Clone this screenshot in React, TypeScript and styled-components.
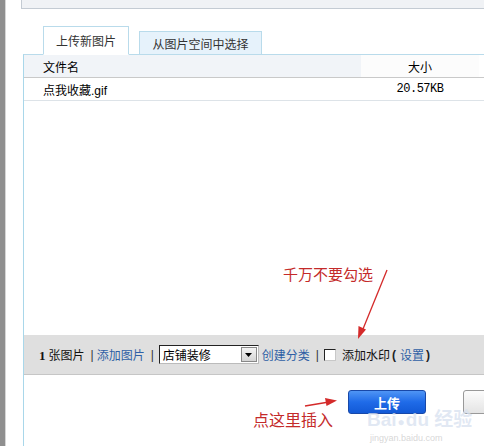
import React from 'react'
import styled, { createGlobalStyle } from 'styled-components';

const GlobalStyle = createGlobalStyle`
  html, body {
    margin: 0;
    padding: 0;
    background: #fff;
    overflow: hidden;
  }
  body {
    font-family: "Liberation Sans", "Noto Sans CJK SC", sans-serif;
    font-size: 12px;
    color: #000;
  }
`;

const App = () => {
  return (
    <>
      <GlobalStyle />
      <Page>
        <Strip />
        <Content>
          <TopPanel />
          <Dialog>
            <Tabs>
              <Tab active>上传新图片</Tab>
              <Tab>从图片空间中选择</Tab>
            </Tabs>
            <TableBox>
              <HeadRow>
                <NameHead>文件名</NameHead>
                <SizeHead>大小</SizeHead>
              </HeadRow>
              <FileRow>
                <NameCell>点我收藏.gif</NameCell>
                <SizeCell>20.57KB</SizeCell>
              </FileRow>
              <Blank />
              <Toolbar>
                <Count><b>1</b>张图片</Count>
                <Sep>|</Sep>
                <BlueLink>添加图片</BlueLink>
                <Sep>|</Sep>
                <FakeSelect>
                  <SelectText>店铺装修</SelectText>
                  <SelectButton>
                    <svg width="7" height="4" viewBox="0 0 7 4"><path d="M0 0h7L3.5 4z" fill="#000" /></svg>
                  </SelectButton>
                </FakeSelect>
                <BlueLink>创建分类</BlueLink>
                <Sep>|</Sep>
                <Check />
                <Plain>添加水印</Plain>
                <Paren>(</Paren>
                <BlueLink>设置</BlueLink>
                <Paren>)</Paren>
              </Toolbar>
              <Footer>
                <UploadButton>上传</UploadButton>
                <GreyButton />
              </Footer>
            </TableBox>
          </Dialog>
        </Content>

        <Note top={263} left={283} size={15}>千万不要勾选</Note>
        <Note top={407} left={253} size={16}>点这里插入</Note>
        <Arrows width="484" height="446" viewBox="0 0 484 446">
          <line x1="387" y1="270" x2="363" y2="329" stroke="#d42a2a" strokeWidth="1.3" />
          <path d="M358 339 L358.5 326 L366 329.5 Z" fill="#d42a2a" />
          <line x1="305" y1="406" x2="326" y2="402.5" stroke="#d42a2a" strokeWidth="1.5" />
          <path d="M337 400.5 L325 398 L326.5 406 Z" fill="#d42a2a" />
        </Arrows>
        <Watermark>
          <Mark>Bai<Paw>●</Paw>du 经验</Mark>
          <SmallMark>jingyan.baidu.com</SmallMark>
        </Watermark>
      </Page>
    </>
  )
}

const Page = styled.div`
  position: relative;
  display: flex;
  width: 484px;
  height: 446px;
  overflow: hidden;
`;

const Strip = styled.div`
  width: 5px;
  flex: none;
  background: #8f8f8f;
  border-right: 1px solid #d6d6d6;
`;

const Content = styled.div`
  flex: 1;
  display: flex;
  flex-direction: column;
  padding-left: 15px;
  min-width: 0;
`;

const TopPanel = styled.div`
  height: 8px;
  flex: none;
  background: #f0f2f5;
  border-left: 1px solid #c4cbd3;
  border-bottom: 1px solid #c4cbd3;
  margin-right: -20px;
`;

const Dialog = styled.div`
  flex: 1;
  display: flex;
  flex-direction: column;
  padding-left: 2px;
  margin-top: 17px;
  margin-right: -40px;
`;

const Tabs = styled.div`
  display: flex;
  align-items: flex-end;
  gap: 10px;
  padding-left: 20px;
  height: 29px;
  position: relative;
  z-index: 1;
  margin-bottom: -1px;
`;

const Tab = styled.div<{ active?: boolean }>`
  box-sizing: border-box;
  display: flex;
  align-items: center;
  justify-content: center;
  height: ${p => (p.active ? '29px' : '24px')};
  width: ${p => (p.active ? '86px' : '123px')};
  background: ${p => (p.active ? '#fff' : '#e6f2fb')};
  border: 1px solid #b9dbeb;
  border-bottom: ${p => (p.active ? '1px solid #fff' : '1px solid #b9dbeb')};
  color: #333;
  white-space: nowrap;
`;

const TableBox = styled.div`
  flex: 1;
  display: flex;
  flex-direction: column;
  border-left: 1px solid #a9d7ea;
  border-top: 1px solid #b9dbeb;
`;

const HeadRow = styled.div`
  display: flex;
  height: 22px;
  border-bottom: 1px solid #c9c9c9;
`;

const NameHead = styled.div`
  width: 318px;
  padding-left: 19px;
  display: flex;
  align-items: center;
  background: #f1f4f8;
`;

const SizeHead = styled.div`
  width: 118px;
  display: flex;
  align-items: center;
  justify-content: center;
  background: #fcfcfc;
`;

const FileRow = styled(HeadRow)`
  border-bottom: 1px solid #dde3e8;
`;

const NameCell = styled(NameHead)`
  background: #fff;
`;

const SizeCell = styled(SizeHead)`
  background: #fff;
  font-family: "Liberation Mono", "Noto Sans CJK SC", monospace;
  letter-spacing: -0.5px;
`;

const Blank = styled.div`
  flex: 1;
`;

const Toolbar = styled.div`
  height: 39px;
  flex: none;
  display: flex;
  align-items: center;
  padding-left: 15px;
  background: #dfdfdf;
  border-bottom: 1px solid #c6c6c6;
  white-space: nowrap;
`;

const Count = styled.span`
  color: #111;
  b {
    font-family: "Liberation Serif", serif;
    font-size: 13px;
    margin-right: 3px;
  }
`;

const Sep = styled.span`
  margin: 0 3px 0 6px;
  color: #333;
`;

const BlueLink = styled.span`
  color: #2f5fa5;
`;

const Plain = styled.span`
  color: #111;
`;

const Paren = styled.span`
  margin: 0 4px 0 2px;
  font-weight: bold;
  color: #222;
`;

const FakeSelect = styled.div`
  display: flex;
  align-items: center;
  box-sizing: border-box;
  width: 100px;
  height: 19px;
  margin: 0 3px 0 2px;
  background: #fff;
  border: 1px solid #222;
  border-right-color: #bbb;
  border-bottom-color: #bbb;
`;

const SelectText = styled.span`
  flex: 1;
  padding-left: 3px;
`;

const SelectButton = styled.div`
  box-sizing: border-box;
  width: 16px;
  height: 15px;
  margin-right: 1px;
  display: flex;
  align-items: center;
  justify-content: center;
  background: linear-gradient(#f4f4f4, #d4d4d4);
  border: 1px solid #888;
`;

const Check = styled.span`
  box-sizing: border-box;
  width: 12px;
  height: 12px;
  margin: 0 6px 0 2px;
  background: #fff;
  border: 1px solid #222;
  border-right-color: #c8c8c8;
  border-bottom-color: #c8c8c8;
`;

const Footer = styled.div`
  height: 71px;
  flex: none;
  display: flex;
  align-items: flex-start;
  padding-top: 15px;
  padding-left: 324px;
  gap: 37px;
  box-sizing: border-box;
`;

const UploadButton = styled.div`
  box-sizing: border-box;
  width: 78px;
  height: 24px;
  flex: none;
  display: flex;
  align-items: center;
  justify-content: center;
  border-radius: 3px;
  border: 1px solid #1848a8;
  background: linear-gradient(#4f95f5, #1f6be8 50%, #1259d6);
  color: #fff;
  font-weight: bold;
  font-size: 13px;
`;

const GreyButton = styled.div`
  box-sizing: border-box;
  width: 70px;
  height: 24px;
  flex: none;
  border-radius: 3px;
  border: 1px solid #999;
  background: linear-gradient(#fcfcfc, #e4e4e4);
`;

const Note = styled.div<{ top: number; left: number; size: number }>`
  position: absolute;
  top: ${p => p.top}px;
  left: ${p => p.left}px;
  font-size: ${p => p.size}px;
  color: #c42a2a;
  white-space: nowrap;
`;

const Arrows = styled.svg`
  position: absolute;
  left: 0;
  top: 0;
  pointer-events: none;
`;

const Watermark = styled.div`
  position: absolute;
  left: 367px;
  top: 410px;
  display: flex;
  flex-direction: column;
  align-items: flex-start;
  pointer-events: none;
`;

const Mark = styled.div`
  font-family: "Liberation Sans", "Noto Sans CJK SC", sans-serif;
  font-size: 19px;
  font-weight: bold;
  color: rgba(215, 225, 240, 0.75);
  line-height: 20px;
  white-space: nowrap;
`;

const Paw = styled.span`
  font-size: 12px;
  margin: 0 1px;
`;

const SmallMark = styled.div`
  font-size: 9px;
  color: rgba(205, 205, 205, 0.8);
  margin-top: 1px;
  margin-left: 3px;
`;

export default App
